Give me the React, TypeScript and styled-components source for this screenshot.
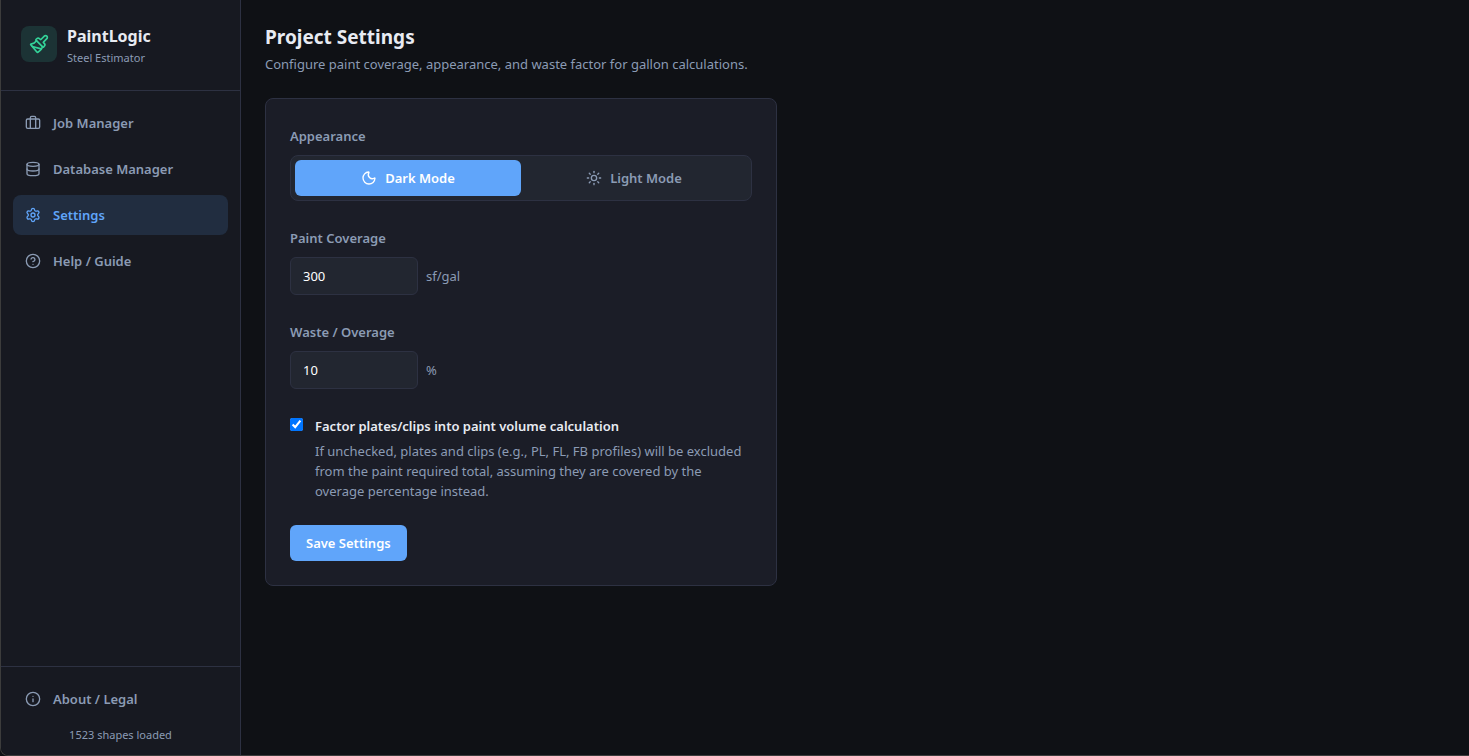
import React, { useState } from "react";
import styled, { createGlobalStyle } from "styled-components";
import { Briefcase, CircleHelp, Database, Info, Moon, Paintbrush, Settings, Sun } from "lucide-react";

const color = {
  page: "#0f1115",
  sidebar: "#171921",
  card: "#1b1d27",
  field: "#222630",
  line: "#2d3142",
  text: "#e8ebf2",
  muted: "#8b9bb4",
  accent: "#60a5fa",
  brand: "#34d399",
};

const GlobalStyle = createGlobalStyle`
  * { box-sizing: border-box; }
  body {
    margin: 0;
    background: ${color.page};
    color: ${color.text};
    font-family: "Segoe UI", "Noto Sans", "Open Sans", sans-serif;
    font-size: 13px;
    line-height: 20px;
  }
  button, input { font: inherit; }
  h1, p { margin: 0; }
`;

const Shell = styled.div`
  display: flex;
  min-height: 100vh;
  background: ${color.page};
  border-left: 1px solid #3c3c3c;
  border-bottom: 1px solid #3c3c3c;
  border-bottom-left-radius: 8px;
`;

const Sidebar = styled.aside`
  display: flex;
  flex-direction: column;
  flex: 0 0 240px;
  background: ${color.sidebar};
  border-right: 1px solid ${color.line};
  border-bottom-left-radius: 8px;
`;

const Brand = styled.div`
  display: flex;
  align-items: center;
  gap: 10px;
  padding: 20px 20px 22px;
  border-bottom: 1px solid ${color.line};
`;

const BrandMark = styled.div`
  display: grid;
  place-items: center;
  width: 36px;
  height: 36px;
  border-radius: 8px;
  background: #1c3335;
  color: ${color.brand};
`;

const BrandText = styled.div`
  padding-top: 4px;
`;

const BrandName = styled.div`
  font-size: 16px;
  font-weight: 700;
  line-height: 24px;
`;

const BrandNote = styled.div`
  color: ${color.muted};
  font-size: 11px;
  line-height: 20px;
`;

const Nav = styled.nav`
  display: flex;
  flex-direction: column;
  flex: 1;
  gap: 6px;
  padding: 12px;
`;

const NavLink = styled.a<{ $active?: boolean }>`
  display: flex;
  align-items: center;
  gap: 12px;
  height: 40px;
  padding: 0 12px;
  border-radius: 8px;
  background: ${(p) => (p.$active ? "#212d40" : "transparent")};
  color: ${(p) => (p.$active ? color.accent : color.muted)};
  font-weight: 600;
  text-decoration: none;
`;

const SidebarFooter = styled.div`
  padding: 12px 12px 10px;
  border-top: 1px solid ${color.line};
`;

const ShapeCount = styled.p`
  margin-top: 6px;
  color: ${color.muted};
  font-size: 11px;
  text-align: center;
`;

const Main = styled.main`
  flex: 1;
  min-width: 0;
  padding: 24px;
`;

const Title = styled.h1`
  margin-bottom: 4px;
  font-size: 19px;
  font-weight: 700;
  line-height: 26px;
`;

const Subtitle = styled.p`
  margin-bottom: 24px;
  color: ${color.muted};
`;

const Card = styled.form`
  display: flex;
  flex-direction: column;
  align-items: stretch;
  gap: 24px;
  max-width: 512px;
  padding: 24px;
  background: ${color.card};
  border: 1px solid ${color.line};
  border-radius: 8px;
`;

const Field = styled.div`
  display: flex;
  flex-direction: column;
  gap: 6px;
`;

const Label = styled.label`
  color: ${color.muted};
  font-weight: 600;
  line-height: 26px;
`;

const Segmented = styled.div`
  display: flex;
  padding: 4px;
  background: ${color.field};
  border: 1px solid ${color.line};
  border-radius: 8px;
`;

const Segment = styled.button<{ $active: boolean }>`
  display: flex;
  flex: 1;
  align-items: center;
  justify-content: center;
  gap: 8px;
  height: 36px;
  padding: 0;
  border: 0;
  border-radius: 6px;
  background: ${(p) => (p.$active ? color.accent : "transparent")};
  color: ${(p) => (p.$active ? "#fff" : color.muted)};
  font-weight: 600;
  cursor: pointer;
`;

const InputRow = styled.div`
  display: flex;
  align-items: center;
  gap: 8px;
  color: ${color.muted};
`;

const TextInput = styled.input`
  width: 128px;
  height: 38px;
  padding: 0 12px;
  background: ${color.field};
  border: 1px solid ${color.line};
  border-radius: 6px;
  color: #fff;
`;

const Option = styled.div`
  display: flex;
  align-items: flex-start;
  gap: 12px;
`;

const Checkbox = styled.input`
  width: 13px;
  height: 13px;
  margin: 5px 0 0;
`;

const OptionBody = styled.div`
  flex: 1;
`;

const OptionLabel = styled.label`
  display: block;
  margin-bottom: 2px;
  font-weight: 600;
  line-height: 26px;
`;

const OptionHint = styled.p`
  color: ${color.muted};
`;

const SaveButton = styled.button`
  align-self: flex-start;
  height: 36px;
  padding: 0 16px;
  border: 0;
  border-radius: 6px;
  background: ${color.accent};
  color: #fff;
  font-weight: 600;
  cursor: pointer;
`;

const navItems = [
  { label: "Job Manager", Icon: Briefcase },
  { label: "Database Manager", Icon: Database },
  { label: "Settings", Icon: Settings, active: true },
  { label: "Help / Guide", Icon: CircleHelp },
];

export default function App() {
  const [mode, setMode] = useState<"dark" | "light">("dark");

  return (
    <>
      <GlobalStyle />
      <Shell>
        <Sidebar>
          <Brand>
            <BrandMark>
              <Paintbrush size={20} />
            </BrandMark>
            <BrandText>
              <BrandName>PaintLogic</BrandName>
              <BrandNote>Steel Estimator</BrandNote>
            </BrandText>
          </Brand>
          <Nav>
            {navItems.map(({ label, Icon, active }) => (
              <NavLink key={label} href="#" $active={active}>
                <Icon size={16} />
                {label}
              </NavLink>
            ))}
          </Nav>
          <SidebarFooter>
            <NavLink href="#">
              <Info size={16} />
              About / Legal
            </NavLink>
            <ShapeCount>1523 shapes loaded</ShapeCount>
          </SidebarFooter>
        </Sidebar>

        <Main>
          <Title>Project Settings</Title>
          <Subtitle>Configure paint coverage, appearance, and waste factor for gallon calculations.</Subtitle>
          <Card onSubmit={(e) => e.preventDefault()}>
            <Field>
              <Label as="div" id="appearance">Appearance</Label>
              <Segmented role="group" aria-labelledby="appearance">
                <Segment type="button" $active={mode === "dark"} onClick={() => setMode("dark")}>
                  <Moon size={16} />
                  Dark Mode
                </Segment>
                <Segment type="button" $active={mode === "light"} onClick={() => setMode("light")}>
                  <Sun size={16} />
                  Light Mode
                </Segment>
              </Segmented>
            </Field>
            <Field>
              <Label htmlFor="coverage">Paint Coverage</Label>
              <InputRow>
                <TextInput id="coverage" inputMode="numeric" defaultValue="300" />
                sf/gal
              </InputRow>
            </Field>
            <Field>
              <Label htmlFor="waste">Waste / Overage</Label>
              <InputRow>
                <TextInput id="waste" inputMode="numeric" defaultValue="10" />
                %
              </InputRow>
            </Field>
            <Option>
              <Checkbox id="plates" type="checkbox" defaultChecked aria-describedby="plates-hint" />
              <OptionBody>
                <OptionLabel htmlFor="plates">Factor plates/clips into paint volume calculation</OptionLabel>
                <OptionHint id="plates-hint">
                  If unchecked, plates and clips (e.g., PL, FL, FB profiles) will be excluded from the paint
                  required total, assuming they are covered by the overage percentage instead.
                </OptionHint>
              </OptionBody>
            </Option>
            <SaveButton type="submit">Save Settings</SaveButton>
          </Card>
        </Main>
      </Shell>
    </>
  );
}
